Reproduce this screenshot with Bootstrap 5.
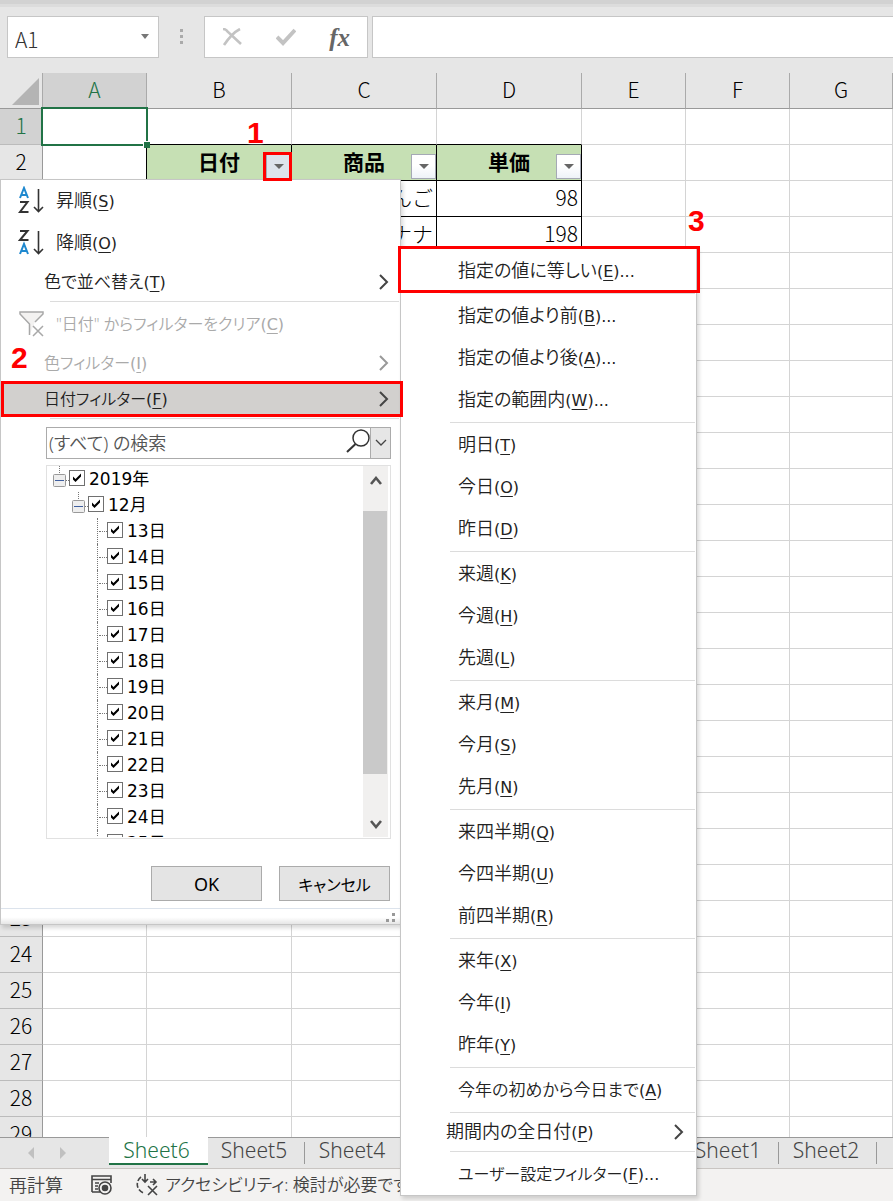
<!DOCTYPE html>
<html lang="ja">
<head>
<meta charset="utf-8">
<meta name="viewport" content="width=device-width, initial-scale=1">
<title>Sheet6</title>
<link href="https://cdn.jsdelivr.net/npm/bootstrap@5.3.0/dist/css/bootstrap.min.css" rel="stylesheet">
<style>
  :root { --chrome:#e6e6e6; --line:#d4d4d4; --edge:#999; --green:#217346; --cjk:"Noto Sans CJK JP",sans-serif; --ui:"Noto Sans","Noto Sans CJK JP",sans-serif; }
  body { font-family:var(--ui); font-size:18px; line-height:24px; color:#222; background:#fff; }
  .app { height:100vh; }
  .top-strip { height:7px; background:#dcdcdc; border-top:4px solid #d2d2d2; }
  .bar-area { background:var(--chrome); height:66px; padding:9px 0 15px 7px; }
  .fx-box { background:#fff; border:1px solid #c6c6c6; }
  .name-box { width:152px; }
  .name-box input { width:110px; padding:4px 0 0 7px; font:300 21px/24px var(--cjk); color:#333; }
  .name-box input, .formula input, .search-box input { border:0; outline:0; background:transparent; min-width:0; }
  .plain-btn { border:0; background:transparent; padding:0; line-height:1; display:flex; align-items:center; justify-content:center; }
  .grip { width:45px; }
  .fx-tools { width:164px; margin-right:4px; }
  .fx-sign { font:italic bold 25px/1 "Liberation Serif",serif; color:#666; }
  .sheet { background:#fff; min-height:0; }
  .cells { table-layout:fixed; width:100%; border-collapse:separate; border-spacing:0; font:300 21px/24px var(--cjk); color:#000; }
  .cells th, .cells td { height:36px; padding:0 0 4px; border-right:1px solid var(--line); border-bottom:1px solid var(--line); position:relative; }
  .cells thead th { background:var(--chrome); border-bottom-color:var(--edge); border-right-color:#aaa; text-align:center; font-weight:300; }
  .cells tbody th { background:var(--chrome); border-right-color:var(--edge); border-bottom-color:#bbb; text-align:center; font-weight:300; }
  .cells .picked { background:#d2d2d2 !important; color:var(--green); }
  .cells td.boxed { border-color:#000; text-align:right; padding-right:3px; }
  .cells td.headed { background:#c6e0b4; border-color:#000; font-weight:700; text-align:center; }
  .cells td.above { border-bottom-color:#000; }
  .cells td.beside { border-right-color:#000; }
  .corner { width:43px; } .col-s { width:104px; } .col-w { width:145px; }
  .drop-btn { position:absolute; right:0; bottom:1px; width:25px; height:25px; border:1px solid #a5a9b5; background:linear-gradient(#fff 45%,#eef3f8); }
  .drop-btn.pressed { background:#dde3ec; }
  .picker { position:absolute; left:-2px; top:-2px; right:-2px; bottom:-2px; border:2px solid var(--green); z-index:1; }
  .picker::after { content:""; position:absolute; right:-4px; bottom:-4px; width:7px; height:7px; background:var(--green); border:1px solid #fff; border-width:1px 0 0 1px; }
  .pane { position:absolute; background:#fff; border:1px solid #c6c6c6; box-shadow:2px 3px 4px rgba(0,0,0,.15); z-index:5; }
  .filter-pane { left:0; top:179px; width:401px; }
  .date-pane { left:399px; top:67px; width:297px; padding:2px 0 0; z-index:6; }
  .entry { display:flex; align-items:center; width:100%; height:42px; border:0; background:transparent; padding:0 11px 0 55px; color:#222; font-feature-settings:"palt"; font-weight:350; line-height:24px; text-align:left; position:relative; white-space:nowrap; }
  .entry.low { height:36px; padding-left:43px; }
  .entry.kana { font-size:16px; }
  .entry.mid { font-size:17px; }
  .entry:disabled { color:#aaa; }
  .entry.current { background:#d2d0ce; }
  .entry .glyph { width:38px; margin-left:-38px; flex:none; }
  .hot { font-family:"DejaVu Sans",sans-serif; font-size:16px; font-weight:400; }
  .date-pane .entry { padding-left:57px; padding-right:12px; }
  .date-pane .entry.low { padding-left:45px; }
  .entry u { text-underline-offset:3px; text-decoration-thickness:1px; }
  .rule { height:1px; background:#dcdcdc; margin:1px 1px 1px 49px; }
  .mark-box { position:absolute; border:3px solid #f00; pointer-events:none; z-index:8; }
  .step { position:absolute; font:bold 30px/30px "Liberation Sans",Arial,sans-serif; color:#f00; text-shadow:0 0 2px #fff,0 0 3px #fff; z-index:9; }
  .search-box { height:32px; margin:8px 9px 6px 45px; border:1px solid #ababab; }
  .search-box input { padding:0 0 0 2px; font-weight:350; color:#555; font-feature-settings:"palt"; }
  .search-box input::placeholder { color:#555; opacity:1; }
  .search-box .more { width:20px; background:#e6e6e6; border-left:1px solid #ababab; }
  .tree-box { height:374px; margin:0 9px 0 45px; border:1px solid #e1e1e1; padding-right:2px; padding-bottom:1px; }
  .branch { height:26px; display:flex; align-items:center; color:#000; font-family:"DejaVu Sans","Noto Sans CJK JP",sans-serif; font-size:17px; font-weight:400; }
  .branch input { appearance:none; width:16px; height:16px; margin:0 4px 2px 0; border:1px solid #707070; background:#fff; flex:none; }
  .branch input:checked { background:#fff url("data:image/svg+xml,%3Csvg xmlns='http://www.w3.org/2000/svg' viewBox='0 0 14 14'%3E%3Cpath d='M3 5.500L5.500 8L11 2.500V5.500L5.500 11L3 8.500Z' fill='%23000'/%3E%3C/svg%3E") center/14px; }
  .lv1 { padding-left:6px; } .lv2 { padding-left:25px; } .lv3 { padding-left:50px; }
  .twig { width:10px; height:26px; flex:none; border-left:1px dotted #777; position:relative; }
  .twig::after { content:""; position:absolute; left:1px; right:0; top:13px; border-top:1px dotted #777; }
  .scroll { width:25px; background:#f1f0ef; }
  .scroll .thumb { height:263px; width:24px; background:#c9c9c9; }
  .scroll .plain-btn { height:45px; width:25px; }
  .scroll .plain-btn:last-child { padding-top:20px; }
  .pane-actions { gap:17px; padding:27px 10px 0 0; }
  .pane-foot { height:16px; margin-top:7px; border-top:1px solid #dce3ec; background:linear-gradient(#fff 55%,#e6e6e6); }
  .dlg-btn { width:111px; height:35px; background:#e4e4e4; border:1px solid #ababab; border-radius:0; padding:2px 0 0; font-size:18px; font-weight:400; color:#000; font-feature-settings:"palt"; }
  .dlg-btn.kana { font-size:16px; }
  .tabs-bar { height:32px; background:var(--chrome); border-top:1px solid var(--edge); border-bottom:1px solid #c9c5c2; }
  .tab-nav { width:109px; padding-left:26px; }
  .sheet-tab { width:98px; height:27px; padding-right:4px; font-size:21px; line-height:24px; text-align:center; color:#444; text-decoration:none; position:relative; font-weight:350; flex:none; }
  .sheet-tab + .sheet-tab::after, .parted::after { content:""; position:absolute; right:0; top:4px; height:22px; border-right:1px solid #999; }
  .sheet-tab.on { width:99px; background:#fff; color:var(--green); border-bottom:2px solid var(--green); margin-top:-1px; height:28px; line-height:26px; }
  .sheet-tab.on + .sheet-tab { margin-left:-1px; }
  .unlisted { width:278px; flex:none; }
  .status { height:32px; background:#f3f2f1; padding-left:9px; color:#444; font-weight:350; font-feature-settings:"palt"; white-space:nowrap; }
  .status .kana { font-size:17px; }
  .mark-a { left:263px; top:152px; width:29px; height:29px; }
  .mark-b { left:1px; top:381px; width:402px; height:36px; }
  .mark-c { left:398px; top:246px; width:302px; height:47px; }
  .step-a { left:247px; top:118px; } .step-b { left:11px; top:343px; } .step-c { left:688px; top:206px; }
</style>
</head>
<body>
<div class="app d-flex flex-column overflow-hidden position-relative">
  <div class="top-strip flex-shrink-0"></div>
  <header class="bar-area d-flex flex-shrink-0">
    <div class="fx-box name-box d-flex align-items-center justify-content-between">
      <input type="text" value="A1" aria-label="名前ボックス">
      <button class="plain-btn pe-2" aria-label="名前の一覧"><svg width="9" height="6"><path d="M0 0H8L4 5Z" fill="#777"/></svg></button>
    </div>
    <div class="grip d-flex align-items-center justify-content-center"><svg width="3" height="16" fill="#aaa"><path d="M0 0h3v3H0zM0 6h3v3H0zM0 12h3v3H0z"/></svg></div>
    <div class="fx-box fx-tools d-flex align-items-center justify-content-around">
      <button class="plain-btn" aria-label="キャンセル"><svg width="20" height="18"><path d="M1 1Q4 1 6 4L19 16M18 1Q10 5 2 17" fill="none" stroke="#c3c3c3" stroke-width="2.600"/></svg></button>
      <button class="plain-btn" aria-label="入力"><svg width="20" height="18"><path d="M1 9L7 15L19 2" fill="none" stroke="#c3c3c3" stroke-width="4"/></svg></button>
      <button class="plain-btn fx-sign" aria-label="関数の挿入">fx</button>
    </div>
    <div class="fx-box formula flex-grow-1 border-end-0 d-flex"><input class="w-100" type="text" aria-label="数式バー"></div>
  </header>

  <main class="sheet flex-grow-1 overflow-hidden">
    <table class="cells">
      <colgroup><col class="corner"><col class="col-s"><col class="col-w"><col class="col-w"><col class="col-w"><col class="col-s"><col class="col-s"><col></colgroup>
      <thead><tr>
        <th class="p-0" aria-label="すべて選択"><svg class="d-block ms-2" width="34" height="34"><path d="M4 31H31V4Z" fill="#b4b4b4"/></svg></th>
        <th class="picked">A</th><th>B</th><th>C</th><th>D</th><th>E</th><th>F</th><th>G</th>
      </tr></thead>
      <tbody id="rows">
        <tr><th class="picked">1</th><td><div class="picker"></div></td><td class="above"></td><td class="above"></td><td class="above"></td><td></td><td></td><td></td></tr>
        <tr><th>2</th><td class="beside"></td>
          <td class="headed">日付<button class="plain-btn drop-btn pressed" aria-label="日付の絞り込み"><svg width="10" height="6"><path d="M0 0H10L5 5Z" fill="#666"/></svg></button></td>
          <td class="headed">商品<button class="plain-btn drop-btn" aria-label="商品の絞り込み"><svg width="10" height="6"><path d="M0 0H10L5 5Z" fill="#666"/></svg></button></td>
          <td class="headed">単価<button class="plain-btn drop-btn" aria-label="単価の絞り込み"><svg width="10" height="6"><path d="M0 0H10L5 5Z" fill="#666"/></svg></button></td>
          <td></td><td></td><td></td></tr>
        <tr><th>3</th><td class="beside"></td><td class="boxed"></td><td class="boxed">りんご</td><td class="boxed">98</td><td></td><td></td><td></td></tr>
        <tr><th>4</th><td class="beside"></td><td class="boxed"></td><td class="boxed">バナナ</td><td class="boxed">198</td><td></td><td></td><td></td></tr>
      </tbody>
    </table>
  </main>

  <nav class="tabs-bar d-flex flex-shrink-0" aria-label="シート">
    <div class="tab-nav d-flex flex-shrink-0 align-items-center gap-4">
      <button class="plain-btn" aria-label="前のシート"><svg width="8" height="12"><path d="M8 0V12L2 6Z" fill="#c0c0c0"/></svg></button>
      <button class="plain-btn" aria-label="次のシート"><svg width="8" height="12"><path d="M2 0V12L8 6Z" fill="#c0c0c0"/></svg></button>
    </div>
    <a class="sheet-tab on" href="#">Sheet6</a><a class="sheet-tab" href="#">Sheet5</a><a class="sheet-tab" href="#">Sheet4</a>
    <div class="unlisted"></div>
    <a class="sheet-tab parted" href="#">Sheet1</a><a class="sheet-tab" href="#">Sheet2</a>
  </nav>
  <footer class="status d-flex align-items-center flex-shrink-0">
    <span>再計算</span>
    <svg class="flex-shrink-0 ms-4 me-3" width="32" height="24" fill="none" stroke="#444" stroke-width="1.600"><path d="M5 19H13M5 19V3H24V10M5 6.500H24M8 10H12M8 13H11M8 16H11"/><circle cx="18" cy="15" r="6"/><circle cx="18" cy="15" r="2.500" fill="#444"/></svg>
    <svg class="flex-shrink-0" width="26" height="24" fill="none" stroke="#444" stroke-width="1.600"><path d="M10 1V9M7 6L10 9L13 6"/><path d="M6 4A9 9 0 0 0 9 20" stroke-dasharray="5 2"/><path d="M15 9H20M18 6L21 9L18 12M13 13L22 22M22 13L13 22"/></svg>
    <span class="kana ms-1">アクセシビリティ: 検討が必要です</span>
  </footer>

  <section class="pane filter-pane" aria-label="フィルター">
    <button class="entry"><svg class="glyph" width="38" height="30" viewBox="0 0 38 30" fill="none"><path d="M2 12L6 2L10 12M3.500 9H8.500" stroke="#1e88cf" stroke-width="2"/><path d="M2 16H9.500L2 26H10.500" stroke="#333" stroke-width="2"/><path d="M20.500 3V25M16 21L20.500 25.500L25 21" stroke="#333" stroke-width="1.600"/></svg><span>昇順<span class="hot">(<u>S</u>)</span></span></button>
    <button class="entry"><svg class="glyph" width="38" height="30" viewBox="0 0 38 30" fill="none"><path d="M2 3H9.500L2 12H10.500" stroke="#333" stroke-width="2"/><path d="M2 26L6 16L10 26M3.500 23H8.500" stroke="#1e88cf" stroke-width="2"/><path d="M20.500 3V25M16 21L20.500 25.500L25 21" stroke="#333" stroke-width="1.600"/></svg><span>降順<span class="hot">(<u>O</u>)</span></span></button>
    <button class="entry low mid"><span>色で並べ替え<span class="hot">(<u>T</u>)</span></span><svg class="ms-auto" width="11" height="16" fill="none" stroke="#444" stroke-width="2"><path d="M2 1L9 8L2 15"/></svg></button>
    <div class="rule"></div>
    <button class="entry kana" disabled><svg class="glyph" width="38" height="30" viewBox="0 0 38 30" fill="none" stroke="#a8a8a8" stroke-width="1.500"><path d="M11.500 26V15L2 5V3H25V5L17 13" fill="#f3f2f1"/><path d="M15 17L25 27M25 17L15 27"/></svg><span>"日付" からフィルターをクリア<span class="hot">(<u>C</u>)</span></span></button>
    <button class="entry low kana" disabled><span>色フィルター<span class="hot">(<u>I</u>)</span></span><svg class="ms-auto" width="11" height="16" fill="none" stroke="#999" stroke-width="2"><path d="M2 1L9 8L2 15"/></svg></button>
    <button class="entry low kana current"><span>日付フィルター<span class="hot">(<u>F</u>)</span></span><svg class="ms-auto" width="11" height="16" fill="none" stroke="#444" stroke-width="2"><path d="M2 1L9 8L2 15"/></svg></button>
    <div class="rule"></div>
    <div class="search-box d-flex align-items-stretch">
      <input class="flex-grow-1" type="text" placeholder="(すべて) の検索" aria-label="検索">
      <svg class="flex-shrink-0" width="24" height="28" fill="none" stroke="#333"><circle cx="15" cy="10" r="8" stroke-width="1.500"/><path d="M9.500 16L1 24" stroke-width="2"/></svg>
      <button class="plain-btn more" aria-label="検索範囲"><svg width="12" height="8" fill="none" stroke="#444" stroke-width="1.300"><path d="M1 1L6 6L11 1"/></svg></button>
    </div>
    <div class="tree-box d-flex">
      <div class="flex-grow-1 overflow-hidden" id="tree">
        <label class="branch lv1"><svg width="16" height="26"><path d="M6.500 0V8M13 14.500H16" stroke="#777" stroke-dasharray="1 1"/><rect x=".5" y="8.500" width="12" height="12" rx="1" fill="#eee" stroke="#999"/><path d="M2 14.500H11" stroke="#3f5f9f"/></svg><input type="checkbox" checked><span>2019年</span></label>
        <label class="branch lv2"><svg width="16" height="26"><path d="M6.500 0V8M13 14.500H16" stroke="#777" stroke-dasharray="1 1"/><rect x=".5" y="8.500" width="12" height="12" rx="1" fill="#eee" stroke="#999"/><path d="M2 14.500H11" stroke="#3f5f9f"/></svg><input type="checkbox" checked><span>12月</span></label>
      </div>
      <div class="scroll d-flex flex-column">
        <button class="plain-btn pb-3" aria-label="上へ"><svg width="12" height="9" fill="none" stroke="#555" stroke-width="2.600"><path d="M1 8L6 2L11 8"/></svg></button>
        <div class="thumb"></div>
        <button class="plain-btn mt-auto" aria-label="下へ"><svg width="12" height="9" fill="none" stroke="#555" stroke-width="2.600"><path d="M1 1L6 7L11 1"/></svg></button>
      </div>
    </div>
    <div class="d-flex justify-content-end pane-actions"><button class="btn dlg-btn">OK</button><button class="btn dlg-btn kana">キャンセル</button></div>
    <div class="pane-foot d-flex justify-content-end align-items-start pe-1"><svg class="mt-1" width="10" height="10" fill="#999"><path d="M6 0h3v3H6zM0 6h3v3H0zM6 6h3v3H6z"/></svg></div>

    <div class="pane date-pane" id="dates"></div>
  </section>

  <div class="mark-box mark-a"></div><div class="step step-a">1</div>
  <div class="mark-box mark-b"></div><div class="step step-b">2</div>
  <div class="mark-box mark-c"></div><div class="step step-c">3</div>
</div>
<script>
  const rows = document.getElementById('rows');
  for (let n = 5; n <= 29; n++) rows.insertAdjacentHTML('beforeend', '<tr><th>' + n + '</th>' + '<td></td>'.repeat(7) + '</tr>');

  const tree = document.getElementById('tree');
  for (let d = 13; d <= 25; d++) tree.insertAdjacentHTML('beforeend', '<label class="branch lv3"><span class="twig"></span><input type="checkbox" checked><span>' + d + '日</span></label>');

  const groups = [
    ['指定の値に等しい(E)...'],
    ['指定の値より前(B)...', '指定の値より後(A)...', '指定の範囲内(W)...'],
    ['明日(T)', '今日(O)', '昨日(D)'],
    ['来週(K)', '今週(H)', '先週(L)'],
    ['来月(M)', '今月(S)', '先月(N)'],
    ['来四半期(Q)', '今四半期(U)', '前四半期(R)'],
    ['来年(X)', '今年(I)', '昨年(Y)'],
    ['今年の初めから今日まで(A)'],
    ['期間内の全日付(P)'],
    ['ユーザー設定フィルター(F)...']
  ];
  const arrow = '<svg class="ms-auto" width="11" height="16" fill="none" stroke="#444" stroke-width="2"><path d="M2 1L9 8L2 15"/></svg>';
  document.getElementById('dates').innerHTML = groups.map(g => g.map(t => {
    const sub = t.includes('(P)');
    const size = t.startsWith('ユーザー') ? ' kana' : t.startsWith('今年の') ? ' mid' : '';
    return '<button class="entry' + size + (sub ? ' low' : '') + '"><span>' + t.replace(/\((\w)\)(.*)/, '<span class="hot">(<u>$1</u>)$2</span>') + '</span>' + (sub ? arrow : '') + '</button>';
  }).join('')).join('<div class="rule"></div>');
</script>
<script src="https://cdn.jsdelivr.net/npm/bootstrap@5.3.0/dist/js/bootstrap.bundle.min.js"></script>
</body>
</html>
